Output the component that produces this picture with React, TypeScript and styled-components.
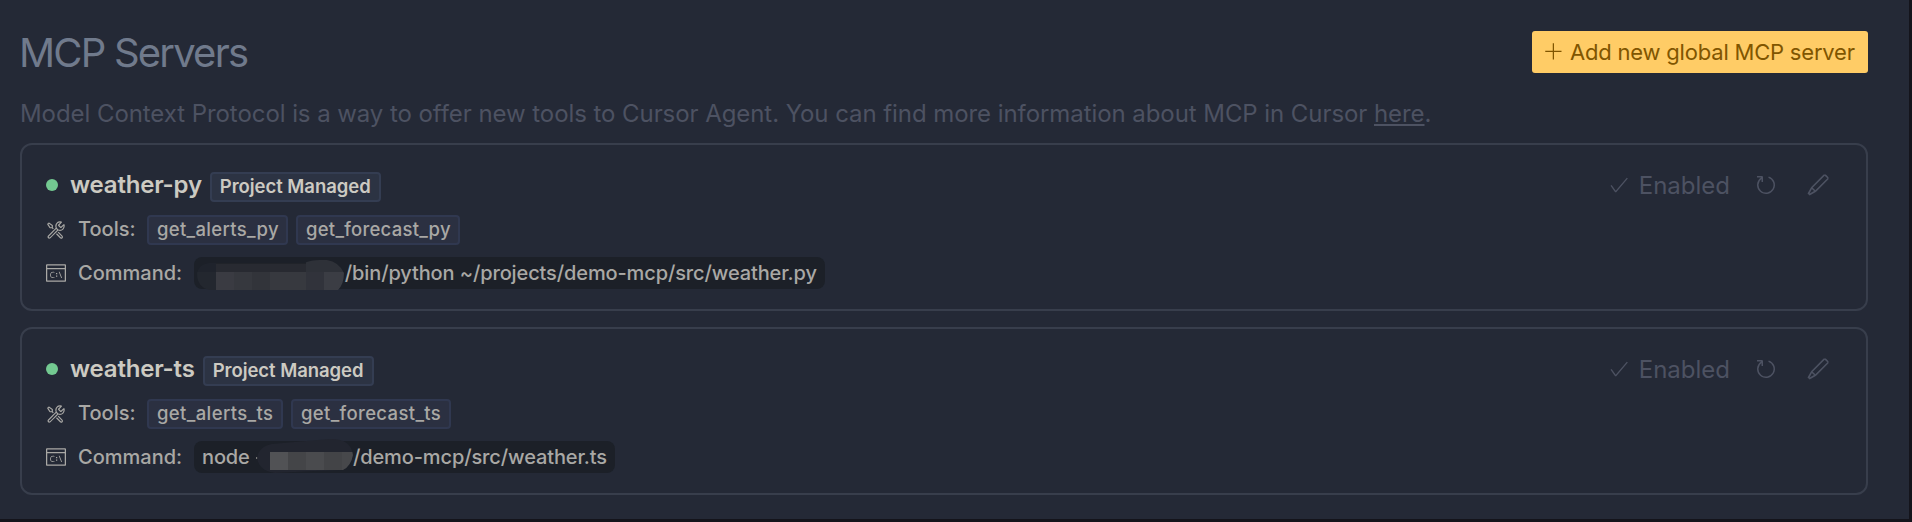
import React from 'react';
import styled, { createGlobalStyle } from 'styled-components';
import { VscTools, VscTerminalCmd, VscRefresh, VscEdit, VscCheck, VscAdd } from 'react-icons/vsc';

const GlobalStyle = createGlobalStyle`
  *, *::before, *::after { box-sizing: border-box; }
  body {
    margin: 0;
    background: #14141b;
    font-family: Inter, 'Liberation Sans', sans-serif;
  }
`;

const Page = styled.main`
  height: 522px;
  border-right: 3px solid #14141b;
  border-bottom: 3px solid #14141b;
  padding: 31px 41px 0 20px;
  background: #242936;
  overflow: hidden;
`;

const Header = styled.header`
  display: flex;
  justify-content: space-between;
  align-items: center;
  height: 42px;
`;

const Title = styled.h1`
  margin: 1px 0 0 -1px;
  font-size: 40px;
  line-height: 42px;
  font-weight: 400;
  letter-spacing: -1.8px;
  color: #707a8c;
`;

const AddButton = styled.button`
  display: flex;
  align-items: center;
  gap: 6px;
  width: 336px;
  height: 42px;
  padding: 0 0 0 12px;
  border: 0;
  border-radius: 3px;
  background: #ffcc66;
  color: #805500;
  font: 400 22px/42px Inter, sans-serif;
  letter-spacing: -0.2px;
  white-space: nowrap;
`;

const Description = styled.p`
  margin: 26px 0 14px;
  font-size: 24px;
  line-height: 30px;
  letter-spacing: -0.068px;
  color: #4d5262;
  white-space: nowrap;
`;

const DocsLink = styled.a`
  color: inherit;
  text-decoration: underline;
  text-decoration-thickness: 2px;
  text-underline-offset: 2px;
  text-decoration-skip-ink: none;
`;

const ServerList = styled.div`
  display: flex;
  flex-direction: column;
  gap: 16px;
`;

const Card = styled.section`
  height: 168px;
  padding: 27px 24px 20px;
  border: 2px solid #383e4c;
  border-radius: 12px;
  color: #a9a8a5;
`;

const CardHeader = styled.div`
  display: flex;
  justify-content: space-between;
  height: 30px;
`;

const Identity = styled.div`
  display: flex;
  align-items: center;
`;

const StatusDot = styled.span`
  width: 12px;
  height: 12px;
  margin: 0 12px 4px 0;
  border-radius: 50%;
  background: #73c991;
`;

const ServerName = styled.h2`
  margin: 0 8px 4px 0;
  font-size: 24px;
  line-height: 30px;
  font-weight: 600;
  letter-spacing: -0.2px;
  color: #cccac2;
`;

const Badge = styled.span<{ $width: number; $track: number; $strong?: boolean }>`
  width: ${p => p.$width}px;
  height: 30px;
  padding: 0 8px;
  border: 2px solid ${p => (p.$strong ? '#343d52' : '#303850')};
  border-radius: 4px;
  background: ${p => (p.$strong ? '#2c3343' : '#2b3041')};
  color: ${p => (p.$strong ? '#cccac2' : '#a9a8a5')};
  font-size: 18.5px;
  line-height: 25px;
  font-weight: ${p => (p.$strong ? 600 : 450)};
  letter-spacing: ${p => p.$track}px;
  white-space: nowrap;
`;

const Actions = styled.div`
  display: flex;
  align-items: center;
  height: 26px;
  margin-right: 12px;
  color: #4d5262;
`;

const Enabled = styled.span`
  margin: 1px 24px 0 9px;
  font-size: 24px;
  line-height: 26px;
`;

const EditIcon = styled(VscEdit)`
  margin-left: 28px;
`;

const Row = styled.div<{ $height: number; $top: number }>`
  display: flex;
  align-items: center;
  height: ${p => p.$height}px;
  margin-top: ${p => p.$top}px;
`;

const Label = styled.span<{ $width: number; $bottom: number }>`
  width: ${p => p.$width}px;
  margin: 0 12px ${p => p.$bottom}px;
  font-size: 20px;
  line-height: 28px;
  font-weight: 450;
`;

const Tools = styled.div`
  display: flex;
  gap: 8px;
`;

const Command = styled.code<{ $width: number }>`
  display: flex;
  width: ${p => p.$width}px;
  height: 32px;
  padding: 0 0 0 8px;
  border-radius: 8px;
  background: #1c2028;
  font: 450 20px/32px Inter, sans-serif;
  letter-spacing: -0.12px;
  white-space: pre;
`;

const Redaction = styled.svg<{ $shift: number }>`
  flex: none;
  overflow: visible;
  margin-left: ${p => p.$shift}px;
`;

function PythonPathMask() {
  return (
    <Redaction width={150.8} height={32} viewBox="0 0 150.8 32" $shift={-8}>
      <clipPath id="mask-py">
        <path d="M3 16Q5 7 15 6H110Q117 3 126 3H133Q145 5 150 16Q150 27 144 33H16Q3 31 3 16Z" />
      </clipPath>
      <g clipPath="url(#mask-py)" shapeRendering="crispEdges">
        <rect x="0" y="0" width="22" height="15" fill="#1f232c" />
        <rect x="0" y="15" width="22" height="18" fill="#23272f" />
        <rect x="22" y="0" width="90" height="7" fill="#202329" />
        <rect x="22" y="7" width="90" height="8" fill="#282a31" />
        <rect x="112" y="0" width="40" height="15" fill="#2e3138" />
        <rect x="22" y="15" width="18" height="18" fill="#3a3b42" />
        <rect x="40" y="15" width="18" height="18" fill="#36383e" />
        <rect x="58" y="15" width="18" height="18" fill="#32343a" />
        <rect x="76" y="15" width="36" height="18" fill="#37393f" />
        <rect x="112" y="15" width="18" height="18" fill="#31333b" />
        <rect x="130" y="15" width="22" height="18" fill="#3b3d44" />
      </g>
    </Redaction>
  );
}

function NodePathMask() {
  return (
    <Redaction width={98} height={32} viewBox="0 0 98 32" $shift={0}>
      <rect x="1" y="16" width="3" height="2" fill="#777876" />
      <clipPath id="mask-ts">
        <path d="M2 17Q4 5 17 3L74 -2Q96 -3 98 14Q96 25 88 29L60 30L20 32Q4 30 2 17Z" />
      </clipPath>
      <g clipPath="url(#mask-ts)" shapeRendering="crispEdges">
        <rect x="0" y="-4" width="100" height="38" fill="#22252f" />
        <rect x="15" y="11" width="18" height="18" fill="#515255" />
        <rect x="33" y="11" width="18" height="18" fill="#444548" />
        <rect x="51" y="11" width="18" height="18" fill="#4a4b4e" />
        <rect x="69" y="11" width="18" height="18" fill="#434447" />
        <rect x="87" y="11" width="14" height="18" fill="#47484b" />
      </g>
    </Redaction>
  );
}

interface Server {
  name: string;
  tools: { name: string; width: number; track: number }[];
  command: React.ReactNode;
  commandWidth: number;
}

const servers: Server[] = [
  {
    name: 'weather-py',
    tools: [
      { name: 'get_alerts_py', width: 141, track: 0.33 },
      { name: 'get_forecast_py', width: 164, track: 0.25 },
    ],
    commandWidth: 631,
    command: (
      <>
        <PythonPathMask />
        <span>/bin/python ~/projects/demo-mcp/src/weather.py</span>
      </>
    ),
  },
  {
    name: 'weather-ts',
    tools: [
      { name: 'get_alerts_ts', width: 136, track: 0.38 },
      { name: 'get_forecast_ts', width: 160, track: 0.35 },
    ],
    commandWidth: 421,
    command: (
      <>
        <span>node </span>
        <NodePathMask />
        <span>/demo-mcp/src/weather.ts</span>
      </>
    ),
  },
];

function ServerCard({ server }: { server: Server }) {
  return (
    <Card>
      <CardHeader>
        <Identity>
          <StatusDot />
          <ServerName>{server.name}</ServerName>
          <Badge $strong $width={171} $track={-0.05}>Project Managed</Badge>
        </Identity>
        <Actions>
          <VscCheck size={22} />
          <Enabled>Enabled</Enabled>
          <VscRefresh size={24} />
          <EditIcon size={24} />
        </Actions>
      </CardHeader>
      <Row $height={30} $top={13}>
        <VscTools size={20} />
        <Label $width={57} $bottom={2}>Tools:</Label>
        <Tools>
          {server.tools.map(tool => (
            <Badge key={tool.name} $width={tool.width} $track={tool.track}>{tool.name}</Badge>
          ))}
        </Tools>
      </Row>
      <Row $height={32} $top={12}>
        <VscTerminalCmd size={20} />
        <Label $width={104} $bottom={0}>Command:</Label>
        <Command $width={server.commandWidth}>{server.command}</Command>
      </Row>
    </Card>
  );
}

export default function App() {
  return (
    <>
      <GlobalStyle />
      <Page>
        <Header>
          <Title>MCP Servers</Title>
          <AddButton>
            <VscAdd size={20} />
            Add new global MCP server
          </AddButton>
        </Header>
        <Description>
          Model Context Protocol is a way to offer new tools to Cursor Agent. You can find more
          information about MCP in Cursor <DocsLink>here</DocsLink>.
        </Description>
        <ServerList>
          {servers.map(server => (
            <ServerCard key={server.name} server={server} />
          ))}
        </ServerList>
      </Page>
    </>
  );
}
